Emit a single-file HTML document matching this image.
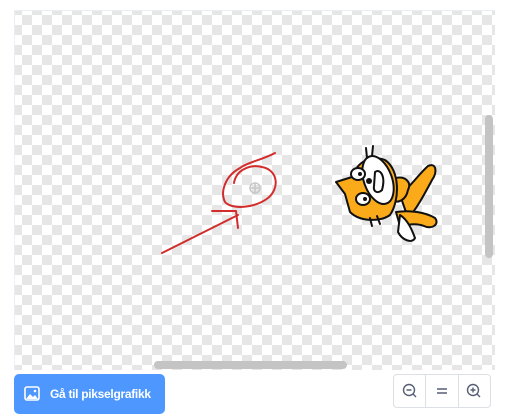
<!DOCTYPE html>
<html><head><style>
html,body{margin:0;padding:0;background:#fff;width:511px;height:420px;overflow:hidden;font-family:"Liberation Sans",sans-serif}
#cv{position:absolute;left:14px;top:10px;width:481px;height:360px;
background-color:#fff;
background-image:conic-gradient(#e6e6e6 25%,#fff 0 50%,#e6e6e6 0 75%,#fff 0);
background-size:20px 20px;background-position:-2px -15px;}
#cv:before{content:"";position:absolute;left:0;top:0;right:0;bottom:0;border-top:1px solid #e8eef3;border-left:1px solid #e8eef3}
.vs{position:absolute;left:485px;top:115px;width:8px;height:143px;border-radius:4px;background:#c4c4c4}
.hs{position:absolute;left:154px;top:361px;width:193px;height:8px;border-radius:4px;background:#c4c4c4}
.btn{position:absolute;left:14px;top:374px;width:151px;height:40px;background:#4d97ff;border-radius:5px;color:#fff;font-weight:bold;font-size:12px;white-space:nowrap;letter-spacing:-0.3px}
.btn span{position:absolute;left:36px;top:13px}
.zm{position:absolute;left:393px;top:374px;width:96px;height:32px;border:1px solid #dcdfe4;border-radius:4px;display:flex;background:#fff}
.zm div{flex:1;border-right:1px solid #dcdfe4;display:flex;align-items:center;justify-content:center}
.zm div:last-child{border-right:none}
</style></head><body>
<div id="cv"></div>
<svg style="position:absolute;left:0;top:0" width="511" height="420">
<g fill="none" stroke="#d32c2c" stroke-width="2" stroke-linecap="round" stroke-linejoin="round">
<path d="M162,253 L238,215"/>
<path d="M212,211 L236,211 L238,228"/>
<path d="M275,153 C262,160 248,162 240,168 C225,176 220,192 225,202 C232,210 255,208 268,198 C280,188 278,170 262,167 C250,164 236,170 234,183"/>
</g>
<g fill="none" stroke="#c8c8c8" stroke-width="1.6"><circle cx="255" cy="188" r="5"/><path d="M250,188h10M255,183v10"/></g>
<g stroke="#111" stroke-width="2" stroke-linejoin="round" stroke-linecap="round">
<path d="M400,195 C412,185 418,175 428,166 C436,162 438,172 432,180 C424,195 416,210 408,218 Z" fill="#fbab1a"/>
<path d="M396,212 C410,210 425,212 435,218 C440,224 432,230 424,226 C414,222 404,226 400,226 Z" fill="#fbab1a"/>
<path d="M400,215 C408,220 412,230 415,238 C412,244 402,240 398,232 Z" fill="#fff"/>
<path d="M396,178 C405,176 412,182 408,190 C406,200 398,204 392,200 Z" fill="#fbab1a"/>
<path d="M336,182 L352,177 C358,160 372,155 385,160 C400,170 400,200 390,215 C380,222 360,222 350,212 L345,194 Z" fill="#fbab1a"/>
<ellipse cx="378" cy="180" rx="14" ry="25" transform="rotate(-20 378 180)" fill="#fff"/>
<path d="M375,172 C380,168 386,176 382,190 C378,194 373,192 374,186 Z" fill="#fff"/>
<ellipse cx="358" cy="174" rx="7" ry="6" fill="#fff"/>
<ellipse cx="363" cy="199" rx="7" ry="6" fill="#fff"/>
<path d="M366,148 L367,158 M373,146 L372,156 M370,218 L372,226 M377,216 L380,224" fill="none"/>
</g>
<circle cx="360" cy="174" r="2" fill="#111"/><circle cx="365" cy="199" r="2" fill="#111"/><circle cx="369" cy="181" r="3" fill="#111"/>
</svg>
<div class="vs"></div><div class="hs"></div>
<div class="btn"><svg style="position:absolute;left:10px;top:12px" width="16" height="15" viewBox="0 0 16 15"><rect x="1" y="1" width="14" height="13" rx="2" fill="none" stroke="#fff" stroke-width="1.6"/><path d="M2,13 L6,8 L9,11 L11,9 L14,13 Z" fill="#fff"/><circle cx="11" cy="5" r="1.3" fill="#fff"/></svg><span>Gå til pikselgrafikk</span></div>
<div class="zm">
<div><svg width="16" height="16"><circle cx="7" cy="7" r="5.5" fill="none" stroke="#575e75" stroke-width="1.4"/><path d="M4.5,7h5M11,11l3,3" stroke="#575e75" stroke-width="1.4"/></svg></div>
<div><svg width="12" height="10"><path d="M1,3h10M1,7h10" stroke="#575e75" stroke-width="1.5"/></svg></div>
<div><svg width="16" height="16"><circle cx="7" cy="7" r="5.5" fill="none" stroke="#575e75" stroke-width="1.4"/><path d="M4.5,7h5M7,4.5v5M11,11l3,3" stroke="#575e75" stroke-width="1.4"/></svg></div>
</div>
</body></html>
